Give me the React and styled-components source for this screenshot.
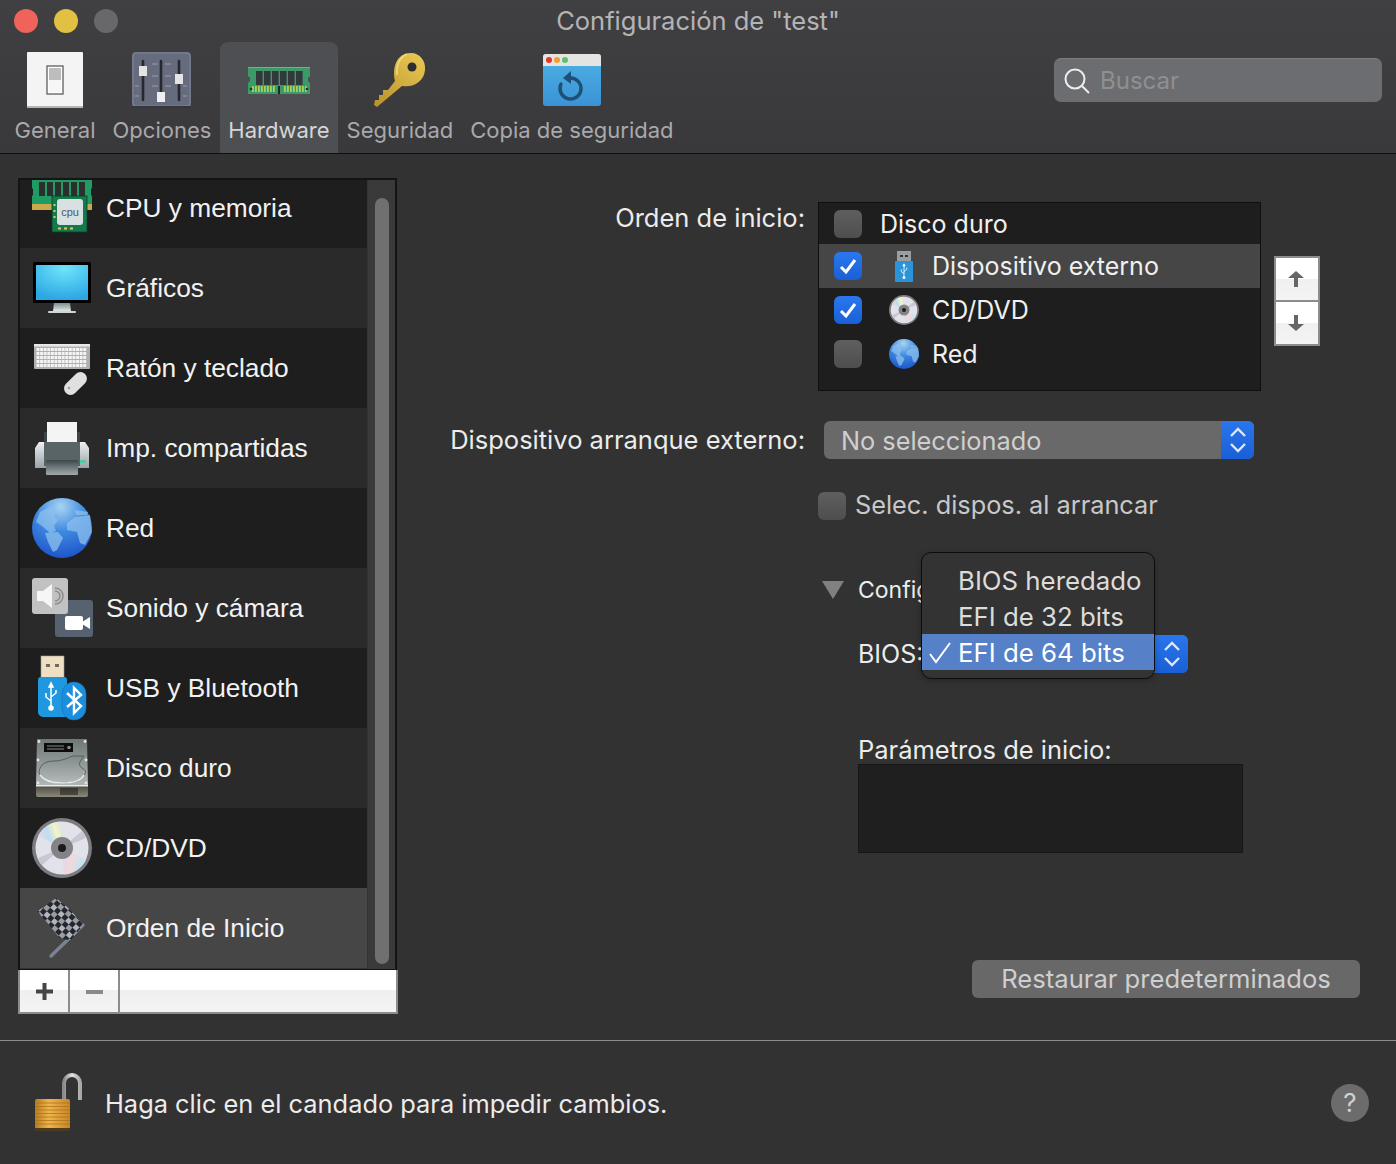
import React from 'react';
import styled, { createGlobalStyle } from 'styled-components';

const GlobalStyle = createGlobalStyle`
    html, body {
        margin: 0;
        padding: 0;
        background: #323232;
    }
    * {
        box-sizing: border-box;
    }
`;

const UI_FONT = `"Inter", "Liberation Sans", sans-serif`;
const LIST_FONT = `"Liberation Sans", Arial, sans-serif`;

const Window = styled.div`
    width: 1396px;
    height: 1164px;
    overflow: hidden;
    background: #323232;
    font-family: ${UI_FONT};
    display: flex;
    flex-direction: column;
`;

const Header = styled.header`
    height: 154px;
    background: linear-gradient(#404043, #39393c);
    border-bottom: 1px solid #0e0e0e;
    flex: none;
`;

const TitleBar = styled.div`
    height: 42px;
    display: grid;
    grid-template-columns: 1fr auto 1fr;
    align-items: center;
    padding: 0 14px;
`;

const Lights = styled.div`
    display: flex;
    gap: 16px;
`;

const Light = styled.span`
    width: 24px;
    height: 24px;
    border-radius: 50%;
    background: ${p => p.$color};
`;

const Title = styled.div`
    font-size: 25.5px;
    padding-bottom: 2px;
    color: #b4b4b6;
`;

const ToolRow = styled.div`
    height: 111px;
    display: flex;
    align-items: flex-start;
    padding: 0 14px 0 6px;
`;

const Tool = styled.div`
    height: 111px;
    padding: 9px 8.5px 0;
    display: flex;
    flex-direction: column;
    align-items: center;
    border-radius: 8px 8px 0 0;
    background: ${p => (p.$active ? '#4e4f52' : 'transparent')};
    color: ${p => (p.$active ? '#d6d6d6' : '#a9a9ab')};
`;

const ToolIcon = styled.div`
    height: 58px;
    display: flex;
    align-items: center;
    justify-content: center;
`;

const ToolLabel = styled.div`
    font-size: 22px;
    line-height: 26px;
    margin-top: 8px;
    white-space: nowrap;
`;

const SearchBox = styled.div`
    margin: 16px 0 0 auto;
    width: 328px;
    height: 44px;
    border-radius: 7px;
    background: #6c6d70;
    border-top: 1px solid #7b7c7f;
    display: flex;
    align-items: center;
    padding-left: 10px;
    gap: 10px;
    font-size: 24px;
    color: #8f9092;
`;

const Main = styled.main`
    height: 886px;
    display: flex;
    flex: none;
`;

const SidePane = styled.div`
    width: 398px;
    padding: 24px 0 0 18px;
    flex: none;
`;

const SideBox = styled.div`
    width: 379px;
    height: 792px;
    border: 2px solid #141414;
    border-bottom-width: 1px;
    display: flex;
    overflow: hidden;
`;

const SideList = styled.div`
    width: 347px;
    flex: none;
    overflow: hidden;
`;

const SideScroll = styled.div`
    margin-top: -12px;
`;

const SideRow = styled.div`
    height: 80px;
    display: flex;
    align-items: center;
    padding-left: 12px;
    gap: 14px;
    font-family: ${LIST_FONT};
    font-size: 26.3px;
    color: #f2f2f2;
    background: ${p => (p.$selected ? '#464646' : p.$alt ? '#2a2a2a' : '#1e1e1e')};
`;

const SideText = styled.span`
    padding-top: 1px;
`;

const ScrollTrack = styled.div`
    flex: 1;
    background: #3a3a3a;
    border-left: 1px solid #333;
    padding: 18px 6px 5px 7px;
`;

const ScrollThumb = styled.div`
    height: 100%;
    border-radius: 8px;
    background: #707070;
`;

const AddBar = styled.div`
    width: 380px;
    height: 44px;
    display: flex;
    border: 2px solid #8c8c8c;
    border-top: 0;
    background: linear-gradient(#fff 0, #fff 47%, #efefef 47%, #f4f4f4 100%);
`;

const AddButton = styled.div`
    width: 50px;
    padding-top: 1px;
    border-right: 2px solid #8c8c8c;
    display: flex;
    align-items: center;
    justify-content: center;
`;

const FormPane = styled.div`
    flex: 1;
    padding-top: 48px;
`;

const FormRow = styled.div`
    display: grid;
    grid-template-columns: 407px auto;
    column-gap: 13px;
    align-items: ${p => p.$align || 'center'};
    margin-top: ${p => p.$top || 0}px;
`;

const FieldLabel = styled.div`
    font-size: 25.5px;
    color: #ececec;
    text-align: right;
    white-space: nowrap;
    line-height: 32px;
`;

const ListWrap = styled.div`
    display: flex;
    align-items: flex-start;
    gap: 13px;
`;

const BootList = styled.div`
    width: 443px;
    height: 189px;
    background: #1e1e1e;
    border: 1px solid #0f0f0f;
    overflow: hidden;
`;

const BootRow = styled.div`
    height: ${p => p.$height || 44}px;
    display: flex;
    align-items: center;
    padding-left: 15px;
    background: ${p => (p.$selected ? '#464646' : 'transparent')};
    font-size: 25px;
    color: #f0f0f0;
`;

const Check = styled.span`
    width: 28px;
    height: 28px;
    flex: none;
    border-radius: 6px;
    background: ${p => (p.$on ? 'linear-gradient(#2b78ee, #1a5fd6)' : 'linear-gradient(#5f5f5f, #4e4e4e)')};
    display: flex;
    align-items: center;
    justify-content: center;
`;

const RowIcon = styled.span`
    width: 30px;
    height: 32px;
    margin: 0 13px 0 27px;
    display: flex;
    align-items: center;
    justify-content: center;
    flex: none;
`;

const RowText = styled.span`
    margin-left: ${p => p.$left || 0}px;
    white-space: nowrap;
`;

const Stepper = styled.div`
    width: 46px;
    height: 90px;
    margin-top: 54px;
    border: 2px solid #8c8c8c;
    display: flex;
    flex-direction: column;
`;

const StepButton = styled.div`
    flex: 1;
    display: flex;
    align-items: center;
    justify-content: center;
    padding-right: 2px;
    background: linear-gradient(#fff 0, #fff 50%, #f0f0f0 50%, #f4f4f4 100%);
    & + & {
        border-top: 2px solid #8c8c8c;
    }
`;

const Select = styled.div`
    width: ${p => p.$width}px;
    height: 38px;
    margin-left: ${p => p.$left || 0}px;
    border-radius: 6px;
    background: #696969;
    display: flex;
    overflow: hidden;
    font-size: 25.3px;
    color: #cfcfcf;
`;

const SelectText = styled.div`
    flex: 1;
    padding: 1px 0 0 17px;
    line-height: 38px;
    white-space: nowrap;
`;

const SelectArrow = styled.div`
    width: 33px;
    flex: none;
    background: linear-gradient(#2a76ec, #1a5fd6);
    display: flex;
    align-items: center;
    justify-content: center;
`;

const CheckLine = styled.div`
    display: flex;
    align-items: center;
    gap: 9px;
    font-size: 25.3px;
    color: #c8c8c8;
`;

const CheckText = styled.span`
    margin: -1px 0 1px;
`;

const BiosSection = styled.div`
    margin: 54px 0 0 424px;
    position: relative;
`;

const Disclosure = styled.div`
    height: 30px;
    display: flex;
    align-items: center;
    gap: 14px;
    font-size: 23px;
    color: #ececec;
`;

const Triangle = styled.span`
    width: 0;
    height: 0;
    border-left: 11px solid transparent;
    border-right: 11px solid transparent;
    border-top: 18px solid #808080;
`;

const BiosRow = styled.div`
    margin: 30px 0 0 36px;
    height: 38px;
    display: flex;
    align-items: center;
    gap: 10px;
    font-size: 25px;
    color: #ececec;
`;

const PopupMenu = styled.div`
    position: absolute;
    left: 99px;
    top: -23px;
    width: 234px;
    height: 127px;
    padding-top: 9px;
    background: #333;
    border: 1px solid #0c0c0c;
    border-radius: 10px;
    box-shadow: 0 2px 6px rgba(0, 0, 0, 0.25);
    font-size: 25.8px;
`;

const MenuItem = styled.div`
    height: 36px;
    display: flex;
    align-items: center;
    padding-left: 36px;
    position: relative;
    background: ${p => (p.$active ? '#5680c8' : 'transparent')};
    color: ${p => (p.$active ? '#fff' : '#dcdcdc')};
    white-space: nowrap;
`;

const MenuCheck = styled.span`
    position: absolute;
    left: 6px;
    top: 8px;
    display: flex;
`;

const ParamLabel = styled.div`
    margin: 63px 0 0 36px;
    font-size: 25.5px;
    line-height: 28px;
    color: #ececec;
`;

const ParamField = styled.div`
    margin-left: 36px;
    width: 385px;
    height: 89px;
    background: #1f1f1f;
    border: 1px solid #161616;
`;

const RestoreRow = styled.div`
    margin: 107px 0 0 574px;
`;

const RestoreButton = styled.div`
    width: 388px;
    height: 38px;
    border-radius: 6px;
    background: #686868;
    color: #cfcfcf;
    font-size: 25.6px;
    line-height: 38px;
    text-align: center;
`;

const Footer = styled.footer`
    flex: 1;
    border-top: 1px solid #8e8e8e;
    display: flex;
    align-items: center;
    padding: 0 27px 0 35px;
    font-size: 25.4px;
    color: #ececec;
`;

const FooterText = styled.div`
    margin-left: 22px;
    padding-top: 1px;
    flex: 1;
`;

const HelpButton = styled.div`
    width: 38px;
    height: 38px;
    border-radius: 50%;
    background: #6c6c6c;
    color: #d0d0d0;
    font-size: 26px;
    line-height: 38px;
    text-align: center;
`;

const Icon = styled.svg`
    display: block;
    flex: none;
    overflow: visible;
`;

const IconSlot = styled.span`
    width: 60px;
    height: 60px;
    flex: none;
    display: block;
`;

// --- drawn icons ---

const SwitchIcon = () => (
    <Icon width="56" height="56" viewBox="0 0 56 56">
        <rect width="56" height="56" rx="1" fill="#f4f4f4" />
        <rect y="54" width="56" height="2" fill="#b4b4b4" />
        <rect x="20" y="14" width="16" height="28" fill="#fff" stroke="#6a6a6a" strokeWidth="1.4" />
        <rect x="22" y="16" width="12" height="12" fill="#bdbdbd" />
        <rect x="22" y="28" width="12" height="12" fill="#f6f6f6" />
    </Icon>
);

const SlidersIcon = () => (
    <Icon width="59" height="56" viewBox="0 0 59 56">
        <rect width="59" height="56" rx="4" fill="#666c7e" />
        <rect x="1" y="1" width="57" height="53" rx="3" fill="none" stroke="#7f8597" strokeWidth="1" />
        <rect y="54" width="59" height="2" rx="1" fill="#34363f" />
        <path d="M20 12h6M33 12h6M20 24h6M33 24h6M20 34h6M33 34h6M3 34h4M51 34h4M3 44h4M51 44h4" stroke="#7f8597" strokeWidth="2" />
        <path d="M11 9v39M29 9v39M47 9v39" stroke="#26282f" strokeWidth="2.600" strokeLinecap="round" />
        <rect x="7" y="14" width="8" height="10" fill="#e4e4e4" />
        <rect x="25" y="40" width="8" height="10" fill="#efefef" />
        <rect x="43" y="22" width="8" height="10" fill="#e4e4e4" />
    </Icon>
);

const RamIcon = () => {
    const chips = [0, 1, 2, 3, 4, 5];
    const pins = [4, 7, 10, 13, 16, 19, 22, 25, 36, 39, 42, 45, 48, 51, 54, 57];
    return (
        <Icon width="62" height="28" viewBox="0 0 62 28">
            <path d="M0 1h62v9l-2 2v3l2 2v11H0V17l2-2v-3l-2-2z" fill="#3b9a68" />
            <rect y="1" width="62" height="1" fill="#5dbb88" />
            {chips.map(i => (
                <rect key={i} x={8 + i * 8} y="5" width="6.600" height="14" fill="#33383a" />
            ))}
            {pins.map(x => (
                <rect key={x} x={x} y="20" width="1.800" height="6" fill="#a9cf5f" />
            ))}
            <rect x="30" y="20" width="2" height="8" fill="#1f2a22" />
            <circle cx="3" cy="23" r="1.300" fill="#183a28" />
            <circle cx="59" cy="23" r="1.300" fill="#183a28" />
        </Icon>
    );
};

const KeyIcon = () => (
    <Icon width="52" height="54" viewBox="0 0 52 54">
        <defs>
            <linearGradient id="keyGrad" x1="0.800" y1="0" x2="0.100" y2="1">
                <stop offset="0" stopColor="#e8c652" />
                <stop offset="1" stopColor="#b9922c" />
            </linearGradient>
        </defs>
        <path d="M1 47H5V42H9V37H14L21 28C18 15 22 0 37 0C46 0 52 8 51 17C50 28 40 35 28 33L3 54L0 52z" fill="url(#keyGrad)" />
        <circle cx="38" cy="14" r="4.500" fill="#2e2e30" />
        <path d="M33 1C26 4 22 12 23 22" stroke="#f2dc80" strokeWidth="1.500" fill="none" />
    </Icon>
);

const BackupIcon = () => (
    <Icon width="58" height="52" viewBox="0 0 58 52">
        <defs>
            <linearGradient id="backupGrad" x1="0" y1="0" x2="0" y2="1">
                <stop offset="0" stopColor="#4eb2e4" />
                <stop offset="1" stopColor="#3a92d6" />
            </linearGradient>
        </defs>
        <rect width="58" height="52" rx="3" fill="url(#backupGrad)" />
        <path d="M0 12V3a3 3 0 0 1 3-3h52a3 3 0 0 1 3 3v9z" fill="#e4e4e2" />
        <circle cx="6" cy="6" r="3" fill="#e2352c" />
        <circle cx="14" cy="6" r="3" fill="#f0a030" />
        <circle cx="22" cy="6" r="3" fill="#5cc06c" />
        <path d="M27 24a10.500 10.500 0 1 1-9 6" fill="none" stroke="#1f4f72" strokeWidth="3.400" strokeLinecap="round" />
        <path d="M20 24l8-7v13z" fill="#1f4f72" />
    </Icon>
);

const SearchIcon = () => (
    <Icon width="26" height="26" viewBox="0 0 26 26">
        <circle cx="11" cy="11" r="9.500" fill="none" stroke="#eee" strokeWidth="2" />
        <path d="M18 18l7 7" stroke="#eee" strokeWidth="2" />
    </Icon>
);

const CpuIcon = () => (
    <Icon width="60" height="60" viewBox="0 0 60 60">
        <path d="M0 2h60v8l-1 1v6l1 1v14H0V18l1-1v-6l-1-1z" fill="#1f9b63" />
        <path d="M0 26h60v6H0z" fill="#c9a94e" />
        <rect x="7" y="4" width="6" height="14" fill="#2b2f2d" />
        <rect x="15" y="4" width="6" height="14" fill="#2b2f2d" />
        <rect x="23" y="4" width="6" height="14" fill="#2b2f2d" />
        <rect x="31" y="4" width="6" height="14" fill="#2b2f2d" />
        <rect x="39" y="4" width="6" height="14" fill="#2b2f2d" />
        <rect x="47" y="4" width="6" height="14" fill="#2b2f2d" />
        <rect x="20" y="18" width="35" height="36" fill="#137a4c" stroke="#0d3d28" strokeWidth="0.8" />
        <rect x="25" y="21" width="26" height="26" rx="3" fill="#d8e0e2" />
        <text x="38" y="38" fontSize="11" textAnchor="middle" fill="#4d5a5e" fontFamily="Liberation Sans">cpu</text>
        <path d="M22.500 26v2M22.500 32v2M22.500 38v2M26 50.500h3M32 50.500h3M38 50.500h3" stroke="#e0c870" strokeWidth="2" />
    </Icon>
);

const MonitorIcon = () => (
    <Icon width="60" height="60" viewBox="0 0 60 60">
        <defs>
            <radialGradient id="screenGrad" cx="0.55" cy="0.1" r="0.9">
                <stop offset="0" stopColor="#6fe4fa" />
                <stop offset="1" stopColor="#2ca6e4" />
            </radialGradient>
            <linearGradient id="standGrad" x1="0" y1="0" x2="0" y2="1">
                <stop offset="0" stopColor="#7f8c8e" />
                <stop offset="1" stopColor="#dfe6e6" />
            </linearGradient>
        </defs>
        <rect x="1" y="4" width="58" height="41" rx="1.500" fill="#000" />
        <rect x="4" y="7" width="52" height="35" fill="url(#screenGrad)" />
        <path d="M22 45h16l1 8H21z" fill="url(#standGrad)" />
        <rect x="16" y="53" width="28" height="2" rx="1" fill="#cfd6d6" />
    </Icon>
);

const KeyboardIcon = () => {
    const keys = [];
    for (let row = 0; row < 5; row++) {
        for (let col = 0; col < 14; col++) {
            keys.push(<rect key={`${row}-${col}`} x={4.500 + col * 3.6} y={10 + row * 4} width="2.900" height="3" fill="#f4f4f4" />);
        }
    }
    return (
        <Icon width="60" height="60" viewBox="0 0 60 60">
            <rect x="2" y="6" width="56" height="25" rx="1" fill="#aeb0b2" />
            <rect x="2" y="6" width="56" height="2.500" fill="#e8e8e8" />
            {keys}
            <rect x="37" y="32" width="13" height="27" rx="6.500" transform="rotate(45 43.500 45.500)" fill="#e0e0e0" />
            <circle cx="37" cy="50" r="1.300" fill="#a0a0a0" />
        </Icon>
    );
};

const PrinterIcon = () => (
    <Icon width="60" height="60" viewBox="0 0 60 60">
        <defs>
            <linearGradient id="printBody" x1="0" y1="0" x2="0" y2="1">
                <stop offset="0" stopColor="#eef0f2" />
                <stop offset="1" stopColor="#9aa2a8" />
            </linearGradient>
            <linearGradient id="printTray" x1="0" y1="0" x2="0" y2="1">
                <stop offset="0" stopColor="#3d4749" />
                <stop offset="1" stopColor="#a2aaac" />
            </linearGradient>
        </defs>
        <rect x="12" y="14" width="36" height="14" fill="#3c4446" />
        <rect x="15" y="4" width="30" height="21" fill="#f4f4f4" />
        <path d="M7 24h46l4 6v20H3V30z" fill="url(#printBody)" />
        <rect x="12" y="24" width="36" height="24" fill="#596466" />
        <rect x="14" y="42" width="32" height="15" rx="1" fill="url(#printTray)" />
        <rect x="48" y="42" width="6" height="3" fill="#54c8a0" />
    </Icon>
);

const GlobeIcon = ({ size = 60 }) => (
    <Icon width={size} height={size} viewBox="0 0 60 60">
        <defs>
            <radialGradient id="globeGrad" cx="0.48" cy="0.15" r="0.9">
                <stop offset="0" stopColor="#a8d4f2" />
                <stop offset="0.45" stopColor="#3f8ae0" />
                <stop offset="1" stopColor="#1a50c8" />
            </radialGradient>
        </defs>
        <circle cx="30" cy="30" r="30" fill="url(#globeGrad)" />
        <path d="M8 14L20 8L24 14L22 18L26 22L22 28L24 33L18 35L10 28L4 24zM13 35L26 34L31 40L25 52L21 54L16 44zM35 25L43 19L58 17L60 34L53 47L48 45L45 34L35 32zM43 12L56 14L55 17L44 17z" fill="#8dc0ee" opacity="0.75" />
    </Icon>
);

const SoundIcon = () => (
    <Icon width="60" height="60" viewBox="0 0 60 60">
        <rect x="23" y="22" width="38" height="37" rx="3" fill="#566270" />
        <rect x="33" y="38" width="18" height="14" rx="2" fill="#fff" />
        <path d="M50 44l8-5v12l-8-5z" fill="#fff" />
        <rect width="36" height="36" rx="3" fill="#c2c2c2" />
        <path d="M5 13h6l9-7v24l-9-7H5z" fill="#f6f6f6" />
        <path d="M23 13a5 5 0 0 1 0 10M23 10a8 8 0 0 1 0 16" fill="none" stroke="#8c8c8c" strokeWidth="1.500" />
    </Icon>
);

const UsbGlyph = ({ x, y, s = 1 }) => (
    <g transform={`translate(${x} ${y}) scale(${s})`} fill="none" stroke="#fff" strokeWidth="1.500">
        <path d="M0 -11v22M-5 -3v4l5 4M5 -6v3l-5 4" />
        <circle cx="0" cy="12" r="2" fill="#fff" />
        <path d="M-2 -9l2 -4 2 4z" fill="#fff" />
    </g>
);

const UsbIcon = () => (
    <Icon width="60" height="60" viewBox="0 0 60 60">
        <rect x="9" y="-2" width="23" height="22" fill="#efe0c4" stroke="#9a9a90" strokeWidth="0.6" />
        <rect x="14" y="6" width="4" height="3" fill="#6f6a60" />
        <rect x="23" y="6" width="4" height="3" fill="#6f6a60" />
        <path d="M6 22c0-2 1-3 3-3h23c2 0 3 1 3 3v37H12c-3 0-6-2-6-5z" fill="#1f98e0" />
        <UsbGlyph x={19} y={38} />
        <rect x="30" y="24" width="24" height="38" rx="12" fill="#1c8fdc" stroke="#1a6eb8" strokeWidth="0.6" />
        <path d="M35 35l14 13-7 7V30l7 7-14 12" fill="none" stroke="#fff" strokeWidth="2.400" />
    </Icon>
);

const HddIcon = () => (
    <Icon width="60" height="60" viewBox="0 0 60 60">
        <defs>
            <linearGradient id="hddGrad" x1="0" y1="0" x2="0" y2="1">
                <stop offset="0" stopColor="#6f7777" />
                <stop offset="1" stopColor="#b0b6b6" />
            </linearGradient>
            <linearGradient id="platterGrad" x1="0" y1="0" x2="0" y2="1">
                <stop offset="0" stopColor="#828a8a" />
                <stop offset="1" stopColor="#b4baba" />
            </linearGradient>
            <linearGradient id="hddBase" x1="0" y1="0" x2="0" y2="1">
                <stop offset="0" stopColor="#4a463c" />
                <stop offset="1" stopColor="#8a8a7a" />
            </linearGradient>
        </defs>
        <path d="M5 1h50l1 46H4z" fill="url(#hddGrad)" />
        <path d="M4 47h52v10a2 2 0 0 1-2 2H6a2 2 0 0 1-2-2z" fill="url(#hddBase)" />
        <rect x="4" y="47" width="52" height="1.500" fill="#e8ecec" />
        <rect x="12" y="5" width="29" height="9" fill="#0c0c0c" />
        <path d="M15 8h17M15 11h17" stroke="#8a8a8a" strokeWidth="1" />
        <circle cx="37" cy="9.500" r="1.800" fill="#8a8a8a" />
        <path d="M7 34C8 26 14 23 22 23C32 23 38 18 42 18L52 18C47 24 46 27 50 30C54 32 54 34 53 36C50 43 40 45 30 45C18 45 8 42 7 34z" fill="url(#platterGrad)" stroke="#4c5252" strokeWidth="0.800" />
        <path d="M8 37C12 43 20 45 30 45C40 45 49 43 52 37" fill="none" stroke="#e8ecec" strokeWidth="1.600" />
        <path d="M29 50v7M31 50v7M33 50v7M35 50v7M37 50v7M39 50v7M41 50v7M43 50v7M45 50v7" stroke="#141414" strokeWidth="1" />
        <circle cx="7" cy="3.500" r="1.400" fill="#e4e4e4" />
        <circle cx="53" cy="3.500" r="1.400" fill="#e4e4e4" />
        <circle cx="6" cy="22" r="1.400" fill="#e4e4e4" />
        <circle cx="54" cy="22" r="1.400" fill="#e4e4e4" />
        <circle cx="6" cy="45" r="1.400" fill="#e4e4e4" />
        <circle cx="54" cy="45" r="1.400" fill="#e4e4e4" />
    </Icon>
);

const CdIcon = ({ size = 60 }) => (
    <Icon width={size} height={size} viewBox="0 0 60 60">
        <defs>
            <linearGradient id="cdWedgeA" x1="0" y1="0.400" x2="1" y2="0">
                <stop offset="0" stopColor="#dcdce6" />
                <stop offset="0.35" stopColor="#bfdcf2" />
                <stop offset="0.65" stopColor="#f0f6c8" />
                <stop offset="1" stopColor="#dcdce6" />
            </linearGradient>
            <linearGradient id="cdWedgeB" x1="0" y1="0.600" x2="1" y2="1">
                <stop offset="0" stopColor="#dcdce6" />
                <stop offset="0.35" stopColor="#f2d8dc" />
                <stop offset="0.65" stopColor="#c4e4ee" />
                <stop offset="1" stopColor="#dcdce6" />
            </linearGradient>
        </defs>
        <circle cx="30" cy="30" r="30" fill="#7c7c80" />
        <circle cx="30" cy="30" r="26.500" fill="#e2e2ea" />
        <path d="M30 30L6 18A26.500 26.500 0 0 1 28 3.500z" fill="url(#cdWedgeA)" />
        <path d="M30 30L54 42A26.500 26.500 0 0 1 32 56.500z" fill="url(#cdWedgeB)" />
        <path d="M30 30L50 13A26.500 26.500 0 0 1 54 20z" fill="#c8c8d4" />
        <path d="M30 30L10 47A26.500 26.500 0 0 1 6 40z" fill="#c8c8d4" />
        <circle cx="30" cy="30" r="11" fill="#838387" />
        <circle cx="30" cy="30" r="4" fill="#1c1c1e" />
    </Icon>
);

const FlagIcon = () => (
    <Icon width="60" height="60" viewBox="0 0 60 60">
        <defs>
            <pattern id="flagCheck" width="10" height="10" patternUnits="userSpaceOnUse" patternTransform="rotate(42)">
                <rect width="10" height="10" fill="#23272f" />
                <rect width="5" height="5" fill="#b4b6bc" />
                <rect x="5" y="5" width="5" height="5" fill="#9a9ca2" />
            </pattern>
        </defs>
        <path d="M51 27L19 58" stroke="#7a8394" strokeWidth="3.400" strokeLinecap="round" />
        <path d="M6 13C12 9 18 4 24 0C28 3 30 6 34 8C36 10 37 11 39 13C43 17 47 22 51 27C47 32 43 37 39 42C35 42 31 41 28 40C24 36 21 32 18 28C15 24 12 21 9 18z" fill="url(#flagCheck)" />
    </Icon>
);

const LockIcon = () => (
    <Icon width="48" height="58" viewBox="0 0 48 58">
        <defs>
            <linearGradient id="lockBody" x1="0" y1="0" x2="1" y2="0">
                <stop offset="0" stopColor="#b87a1e" />
                <stop offset="0.4" stopColor="#efb54a" />
                <stop offset="1" stopColor="#c88524" />
            </linearGradient>
            <linearGradient id="lockShackle" x1="0" y1="0" x2="1" y2="0">
                <stop offset="0" stopColor="#8a8a8a" />
                <stop offset="0.5" stopColor="#e4e4e4" />
                <stop offset="1" stopColor="#a8a8a8" />
            </linearGradient>
        </defs>
        <path d="M29 28V9a8 8 0 0 1 16 0v17" fill="none" stroke="url(#lockShackle)" strokeWidth="4" />
        <rect y="25" width="35" height="30" rx="2" fill="url(#lockBody)" />
        <path d="M0 29h35M0 32.500h35M0 36h35M0 39.500h35M0 43h35M0 46.500h35M0 50h35" stroke="#a86e1c" strokeWidth="1" opacity="0.7" />
        <rect y="54" width="35" height="3" rx="1" fill="#4a3a20" />
    </Icon>
);

const Tick = ({ color = '#fff' }) => (
    <Icon width="18" height="16" viewBox="0 0 18 16">
        <path d="M2 9l5 5L16 2" fill="none" stroke={color} strokeWidth="3" />
    </Icon>
);

const Updown = () => (
    <Icon width="18" height="26" viewBox="0 0 18 26">
        <path d="M2 9l7-7 7 7M2 17l7 7 7-7" fill="none" stroke="#dce8fa" strokeWidth="2.400" />
    </Icon>
);

const Arrow = ({ down }) => (
    <Icon width="16" height="18" viewBox="0 0 16 18">
        <path d={down ? 'M6 1h4v9h6l-8 7-8-7h6z' : 'M6 17h4V8h6L8 1 0 8h6z'} fill="#666" />
    </Icon>
);

const SmallUsb = () => (
    <Icon width="18" height="31" viewBox="0 0 18 31">
        <rect x="2" y="0" width="14" height="11" fill="#9a9ea0" />
        <rect x="5" y="4" width="3" height="2" fill="#333" />
        <rect x="10" y="4" width="3" height="2" fill="#333" />
        <rect y="10" width="18" height="21" rx="1" fill="#2a94d8" />
        <UsbGlyph x={9} y={20} s={0.55} />
    </Icon>
);

const Plus = ({ color }) => (
    <Icon width="17" height="17" viewBox="0 0 17 17">
        <path d="M6.500 0h4v6.500H17v4h-6.500V17h-4v-6.500H0v-4h6.500z" fill={color} />
    </Icon>
);

const Minus = ({ color }) => (
    <Icon width="17" height="4" viewBox="0 0 17 4">
        <rect width="17" height="4" fill={color} />
    </Icon>
);

const tools = [
    { label: 'General', icon: <SwitchIcon /> },
    { label: 'Opciones', icon: <SlidersIcon /> },
    { label: 'Hardware', icon: <RamIcon />, active: true },
    { label: 'Seguridad', icon: <KeyIcon /> },
    { label: 'Copia de seguridad', icon: <BackupIcon /> },
];

const sideItems = [
    { label: 'CPU y memoria', icon: <CpuIcon /> },
    { label: 'Gráficos', icon: <MonitorIcon /> },
    { label: 'Ratón y teclado', icon: <KeyboardIcon /> },
    { label: 'Imp. compartidas', icon: <PrinterIcon /> },
    { label: 'Red', icon: <GlobeIcon /> },
    { label: 'Sonido y cámara', icon: <SoundIcon /> },
    { label: 'USB y Bluetooth', icon: <UsbIcon /> },
    { label: 'Disco duro', icon: <HddIcon /> },
    { label: 'CD/DVD', icon: <CdIcon /> },
    { label: 'Orden de Inicio', icon: <FlagIcon />, selected: true },
];

const App = () => (
    <Window>
        <GlobalStyle />
        <Header>
            <TitleBar>
                <Lights>
                    <Light $color="#f0635a" />
                    <Light $color="#e2c044" />
                    <Light $color="#68686b" />
                </Lights>
                <Title>Configuración de "test"</Title>
            </TitleBar>
            <ToolRow>
                {tools.map(tool => (
                    <Tool key={tool.label} $active={tool.active}>
                        <ToolIcon>{tool.icon}</ToolIcon>
                        <ToolLabel>{tool.label}</ToolLabel>
                    </Tool>
                ))}
                <SearchBox>
                    <SearchIcon />
                    <span>Buscar</span>
                </SearchBox>
            </ToolRow>
        </Header>
        <Main>
            <SidePane>
                <SideBox>
                    <SideList>
                        <SideScroll>
                            {sideItems.map((item, i) => (
                                <SideRow key={item.label} $alt={i % 2 === 1} $selected={item.selected}>
                                    <IconSlot>{item.icon}</IconSlot>
                                    <SideText>{item.label}</SideText>
                                </SideRow>
                            ))}
                        </SideScroll>
                    </SideList>
                    <ScrollTrack>
                        <ScrollThumb />
                    </ScrollTrack>
                </SideBox>
                <AddBar>
                    <AddButton><Plus color="#444" /></AddButton>
                    <AddButton><Minus color="#8a8a8a" /></AddButton>
                </AddBar>
            </SidePane>
            <FormPane>
                <FormRow $align="start">
                    <FieldLabel>Orden de inicio:</FieldLabel>
                    <ListWrap>
                        <BootList>
                            <BootRow $height={41}>
                                <Check />
                                <RowText $left={18}>Disco duro</RowText>
                            </BootRow>
                            <BootRow $selected>
                                <Check $on><Tick /></Check>
                                <RowIcon><SmallUsb /></RowIcon>
                                <RowText>Dispositivo externo</RowText>
                            </BootRow>
                            <BootRow>
                                <Check $on><Tick /></Check>
                                <RowIcon><CdIcon size={30} /></RowIcon>
                                <RowText>CD/DVD</RowText>
                            </BootRow>
                            <BootRow>
                                <Check />
                                <RowIcon><GlobeIcon size={30} /></RowIcon>
                                <RowText>Red</RowText>
                            </BootRow>
                        </BootList>
                        <Stepper>
                            <StepButton><Arrow /></StepButton>
                            <StepButton><Arrow down /></StepButton>
                        </Stepper>
                    </ListWrap>
                </FormRow>
                <FormRow $top={30}>
                    <FieldLabel>Dispositivo arranque externo:</FieldLabel>
                    <Select $width={430} $left={6}>
                        <SelectText>No seleccionado</SelectText>
                        <SelectArrow><Updown /></SelectArrow>
                    </Select>
                </FormRow>
                <FormRow $top={31}>
                    <span />
                    <CheckLine>
                        <Check />
                        <CheckText>Selec. dispos. al arrancar</CheckText>
                    </CheckLine>
                </FormRow>
                <BiosSection>
                    <Disclosure>
                        <Triangle />
                        Config
                    </Disclosure>
                    <BiosRow>
                        BIOS:
                        <Select $width={255}>
                            <SelectText />
                            <SelectArrow><Updown /></SelectArrow>
                        </Select>
                    </BiosRow>
                    <PopupMenu>
                        <MenuItem>BIOS heredado</MenuItem>
                        <MenuItem>EFI de 32 bits</MenuItem>
                        <MenuItem $active>
                            <MenuCheck>
                                <Icon width="24" height="22" viewBox="0 0 24 22">
                                    <path d="M2 12l6 8L22 1" fill="none" stroke="#fff" strokeWidth="2" />
                                </Icon>
                            </MenuCheck>
                            EFI de 64 bits
                        </MenuItem>
                    </PopupMenu>
                    <ParamLabel>Parámetros de inicio:</ParamLabel>
                    <ParamField />
                </BiosSection>
                <RestoreRow>
                    <RestoreButton>Restaurar predeterminados</RestoreButton>
                </RestoreRow>
            </FormPane>
        </Main>
        <Footer>
            <LockIcon />
            <FooterText>Haga clic en el candado para impedir cambios.</FooterText>
            <HelpButton>?</HelpButton>
        </Footer>
    </Window>
);

export default App;
